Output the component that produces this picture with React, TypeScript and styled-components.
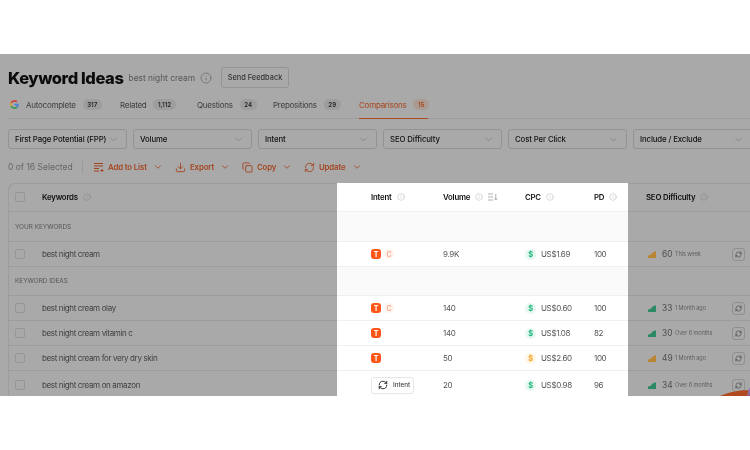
import styled, { createGlobalStyle } from "styled-components";
import { ChevronDown, Copy, Download, Info, RefreshCw } from "lucide-react";

const GlobalStyle = createGlobalStyle`
  html, body {
    margin: 0;
    background: #fff;
    font-family: Inter, "Liberation Sans", sans-serif;
  }
`;

const Page = styled.div`
  width: 750px;
  height: 450px;
  padding-top: 54px;
  box-sizing: border-box;
  overflow: hidden;
`;

const Shot = styled.div`
  position: relative;
  height: 342px;
  background: #a9a9a9;
  overflow: hidden;
  filter: blur(0.3px);
`;

const TitleRow = styled.div`
  display: flex;
  align-items: center;
  height: 21px;
  margin-top: 13px;
  padding-left: 8px;
`;

const Title = styled.h1`
  margin: 0;
  font-size: 16.5px;
  font-weight: 800;
  letter-spacing: -0.4px;
  color: #0c0c0c;
`;

const Subtitle = styled.span`
  margin-left: 5px;
  font-size: 8.4px;
  color: #575757;
`;

const TitleInfo = styled.span`
  display: inline-flex;
  margin-left: 5px;
  color: #5c5c5c;
`;

const FeedbackButton = styled.button`
  height: 21px;
  width: 68px;
  margin-left: 9px;
  padding: 0;
  border: 1px solid #949494;
  border-radius: 3px;
  background: transparent;
  font-family: inherit;
  font-size: 7.4px;
  font-weight: 500;
  color: #333;
`;

const TabBar = styled.div`
  display: flex;
  align-items: center;
  height: 28px;
  box-sizing: border-box;
  margin-top: 3px;
  margin-left: 8px;
  border-bottom: 1px solid #9c9c9c;
`;

const GoogleMark = styled.svg`
  width: 9px;
  height: 9px;
  margin: 0 7px 0 2px;
`;

const Tab = styled.div<{ $active?: boolean; $width: number }>`
  position: relative;
  display: flex;
  align-items: center;
  gap: 7px;
  width: ${(p) => p.$width}px;
  flex: none;
  height: 100%;
  font-size: 8px;
  letter-spacing: -0.25px;
  color: ${(p) => (p.$active ? "#a9441b" : "#3d3d3d")};

  &::after {
    content: "";
    display: ${(p) => (p.$active ? "block" : "none")};
    position: absolute;
    left: 0;
    bottom: -1px;
    width: 69px;
    height: 1px;
    background: #ab4a1f;
  }
`;

const Count = styled.span<{ $active?: boolean }>`
  padding: 2px 4.5px;
  border-radius: 8px;
  font-size: 6.2px;
  font-weight: 600;
  letter-spacing: 0;
  background: ${(p) => (p.$active ? "#a99a92" : "#9d9d9d")};
  color: ${(p) => (p.$active ? "#a9441b" : "#262626")};
`;

const Filters = styled.div`
  display: flex;
  gap: 6px;
  margin-top: 10px;
  padding-left: 8px;
`;

const Filter = styled.div`
  display: flex;
  align-items: center;
  flex: none;
  width: 119px;
  height: 20px;
  box-sizing: border-box;
  padding: 0 7px 0 6px;
  border: 1px solid #939393;
  border-radius: 3px;
  font-size: 7.8px;
  font-weight: 500;
  letter-spacing: -0.12px;
  color: #111;
  justify-content: space-between;
  white-space: nowrap;
`;

const FilterChevron = styled.span`
  display: inline-flex;
  color: #6f6f6f;
`;

const Actions = styled.div`
  display: flex;
  align-items: center;
  height: 18px;
  margin-top: 9px;
  padding-left: 8px;
`;

const Selected = styled.span`
  width: 74px;
  font-size: 8.5px;
  color: #666;
`;

const Divider = styled.span`
  width: 1px;
  height: 13px;
  margin-right: 10px;
  background: #9a9a9a;
`;

const Action = styled.div<{ $width: number }>`
  display: flex;
  align-items: center;
  flex: none;
  gap: 4px;
  width: ${(p) => p.$width}px;
  font-size: 7.8px;
  font-weight: 600;
  letter-spacing: -0.12px;
  color: #a3451f;

  svg:last-child {
    margin-left: 2px;
  }
`;

const Table = styled.div`
  display: flex;
  margin-top: 7px;
  margin-left: 8px;
`;

const Pane = styled.div<{ $spot?: boolean; $width: number }>`
  flex: none;
  width: ${(p) => p.$width}px;
  background: ${(p) => (p.$spot ? "#fff" : "transparent")};
`;

const LeftPane = styled(Pane)`
  box-shadow: inset 1px 1px 0 #9c9c9c;
  border-top-left-radius: 6px;
`;

const RightPane = styled(Pane)`
  box-shadow: inset 0 1px 0 #9c9c9c;
`;

const Row = styled.div<{ $h: number; $spot?: boolean; $band?: boolean }>`
  display: flex;
  align-items: center;
  height: ${(p) => p.$h}px;
  box-sizing: border-box;
  border-bottom: 1px solid ${(p) => (p.$spot ? "#f0f0f0" : "#9c9c9c")};
  background: ${(p) => (p.$spot && p.$band ? "#fafafa" : "transparent")};
`;

const Check = styled.span`
  flex: none;
  width: 8px;
  height: 8px;
  margin: 0 17px 0 7px;
  border: 1px solid #969696;
  border-radius: 2px;
`;

const HeadLabel = styled.span`
  display: inline-flex;
  align-items: center;
  gap: 5px;
  font-size: 7.8px;
  font-weight: 600;
  letter-spacing: -0.2px;
  color: #111;
  white-space: nowrap;

  svg {
    color: #7f7f7f;
  }
`;

const SpotHead = styled(HeadLabel)`
  svg {
    color: #a6a6a6;
  }
`;

const Keyword = styled.span`
  font-size: 8px;
  letter-spacing: -0.36px;
  color: #404040;
`;

const Band = styled.span`
  padding-left: 7px;
  font-size: 6.4px;
  color: #555;
`;

const Cell = styled.div<{ $width: number }>`
  display: flex;
  align-items: center;
  gap: 3px;
  flex: none;
  width: ${(p) => p.$width}px;
  font-size: 8px;
  letter-spacing: -0.35px;
  color: #555;
`;

const Spacer = styled.div<{ $width: number }>`
  flex: none;
  width: ${(p) => p.$width}px;
`;

const SortGlyph = styled.svg`
  width: 10px;
  height: 8px;
  fill: none;
  stroke: #a6a6a6;
  stroke-width: 0.9;
`;

const IntentT = styled.span`
  display: flex;
  align-items: center;
  justify-content: center;
  width: 10px;
  height: 10px;
  border-radius: 3px;
  background: #fd5618;
  color: #fff;
  font-size: 7px;
  font-weight: 700;
`;

const IntentC = styled.span`
  display: flex;
  align-items: center;
  justify-content: center;
  width: 10px;
  height: 10px;
  border-radius: 50%;
  background: #fff3ee;
  color: #ff9c7c;
  font-size: 7px;
  font-weight: 500;
`;

const IntentButton = styled.button`
  display: flex;
  align-items: center;
  gap: 5px;
  width: 43px;
  height: 17px;
  padding: 0 0 0 6px;
  border: 1px solid #e6e6e6;
  border-radius: 3px;
  background: #fff;
  font-family: inherit;
  font-size: 6.3px;
  font-weight: 500;
  color: #444;
`;

const Dollar = styled.span<{ $warn?: boolean }>`
  display: flex;
  align-items: center;
  justify-content: center;
  width: 11px;
  height: 11px;
  margin-right: 2px;
  border-radius: 50%;
  background: ${(p) => (p.$warn ? "#fff6e6" : "#e8f8f1")};
  color: ${(p) => (p.$warn ? "#f4a62a" : "#1fb57a")};
  font-size: 7.5px;
  font-weight: 700;
`;

const DiffIcon = styled.svg<{ $tone: string }>`
  flex: none;
  width: 8px;
  height: 7px;
  margin-left: 20px;
  fill: ${(p) => p.$tone};
`;

const DiffScore = styled.span`
  margin-left: 6px;
  width: 13px;
  font-size: 8.4px;
  color: #4f4f4f;
`;

const DiffAge = styled.span`
  width: 57px;
  font-size: 5.6px;
  letter-spacing: -0.12px;
  color: #606060;
  white-space: nowrap;
`;

const RefreshButton = styled.span`
  display: flex;
  align-items: center;
  justify-content: center;
  flex: none;
  width: 13px;
  height: 13px;
  box-sizing: border-box;
  border: 1px solid #8f8f8f;
  border-radius: 3px;
  color: #333;
`;

const Blob = styled.div`
  position: absolute;
  left: 700px;
  top: 336px;
  width: 100px;
  height: 60px;
  border-radius: 50%;
  background: #b04a1e;
`;

const Halo = styled.div`
  position: absolute;
  left: 747px;
  top: 316px;
  width: 60px;
  height: 60px;
  box-sizing: border-box;
  border: 2px solid #8a72b8;
  border-radius: 50%;
`;

const HEAD_H = 29;
const ROW_H = 25;

type Kw = {
  name: string;
  volume: string;
  cpc: string;
  warn?: boolean;
  pd: string;
  intent: "tc" | "t" | "button";
  tone: string;
  score: string;
  age: string;
  h?: number;
};

const GREEN = "#2b8a63";
const AMBER = "#b98534";

type RowData = { kind: "band"; label: string; h: number } | ({ kind: "row" } & Kw);

const ROWS: RowData[] = [
  { kind: "band", label: "YOUR KEYWORDS", h: 30 },
  { kind: "row", name: "best night cream", volume: "9.9K", cpc: "US$1.69", pd: "100", intent: "tc", tone: AMBER, score: "60", age: "This week" },
  { kind: "band", label: "KEYWORD IDEAS", h: 29 },
  { kind: "row", name: "best night cream olay", volume: "140", cpc: "US$0.60", pd: "100", intent: "tc", tone: GREEN, score: "33", age: "1 Month ago" },
  { kind: "row", name: "best night cream vitamin c", volume: "140", cpc: "US$1.08", pd: "82", intent: "t", tone: GREEN, score: "30", age: "Over 6 months" },
  { kind: "row", name: "best night cream for very dry skin", volume: "50", cpc: "US$2.60", warn: true, pd: "100", intent: "t", tone: AMBER, score: "49", age: "1 Month ago" },
  { kind: "row", name: "best night cream on amazon", volume: "20", cpc: "US$0.98", pd: "96", intent: "button", tone: GREEN, score: "34", age: "Over 6 months", h: 29 },
];

const TABS = [
  { label: "Autocomplete", count: "317", width: 94 },
  { label: "Related", count: "1,112", width: 77 },
  { label: "Questions", count: "24", width: 76 },
  { label: "Prepositions", count: "29", width: 86 },
];

const FILTERS = [
  "First Page Potential (FPP)",
  "Volume",
  "Intent",
  "SEO Difficulty",
  "Cost Per Click",
  "Include / Exclude",
];

function IntentCell({ intent }: { intent: Kw["intent"] }) {
  if (intent === "button") {
    return (
      <IntentButton type="button">
        <RefreshCw size={10} color="#111" />
        Intent
      </IntentButton>
    );
  }
  return (
    <>
      <IntentT>T</IntentT>
      {intent === "tc" && <IntentC>C</IntentC>}
    </>
  );
}

function AddListIcon() {
  return (
    <svg width="11" height="11" viewBox="0 0 11 11" fill="none" stroke="currentColor" strokeWidth="1.1">
      <path d="M1 1.5h9M1 4h9M1 6.5h5M1 9h5" />
      <path d="M7.5 8.5h3M9 7v3" />
    </svg>
  );
}

export default function App() {
  return (
    <Page>
      <GlobalStyle />
      <Shot>
        <TitleRow>
          <Title>Keyword Ideas</Title>
          <Subtitle>best night cream</Subtitle>
          <TitleInfo>
            <Info size={12} strokeWidth={1.2} />
          </TitleInfo>
          <FeedbackButton type="button">Send Feedback</FeedbackButton>
        </TitleRow>

        <TabBar>
          <GoogleMark viewBox="0 0 48 48">
            <path fill="#c9483a" d="M24 9.5c3.5 0 6.6 1.2 9.1 3.6l6.8-6.8C35.8 2.4 30.3 0 24 0 14.6 0 6.5 5.4 2.6 13.2l7.9 6.1C12.4 13.7 17.7 9.5 24 9.5z" />
            <path fill="#4a7fd6" d="M46.9 24.5c0-1.6-.1-3.1-.4-4.5H24v9h12.9c-.6 3-2.2 5.5-4.7 7.2l7.7 6c4.4-4.2 7-10.2 7-17.7z" />
            <path fill="#d6a32c" d="M10.5 28.7c-.5-1.4-.8-3-.8-4.7s.3-3.2.8-4.7l-7.9-6.1C.9 16.5 0 20.1 0 24s.9 7.5 2.6 10.8l7.9-6.1z" />
            <path fill="#3d9a53" d="M24 48c6.5 0 11.9-2.1 15.9-5.8l-7.7-6c-2.2 1.4-4.9 2.3-8.2 2.3-6.3 0-11.6-4.2-13.5-9.8l-7.9 6.1C6.5 42.6 14.6 48 24 48z" />
          </GoogleMark>
          {TABS.map((t) => (
            <Tab key={t.label} $width={t.width}>
              {t.label}
              <Count>{t.count}</Count>
            </Tab>
          ))}
          <Tab $active $width={80}>
            Comparisons
            <Count $active>15</Count>
          </Tab>
        </TabBar>

        <Filters>
          {FILTERS.map((f) => (
            <Filter key={f}>
              {f}
              <FilterChevron>
                <ChevronDown size={11} strokeWidth={1.2} />
              </FilterChevron>
            </Filter>
          ))}
        </Filters>

        <Actions>
          <Selected>0 of 16 Selected</Selected>
          <Divider />
          <Action $width={82}>
            <AddListIcon />
            Add to List
            <ChevronDown size={10} />
          </Action>
          <Action $width={67}>
            <Download size={11} />
            Export
            <ChevronDown size={10} />
          </Action>
          <Action $width={62}>
            <Copy size={11} />
            Copy
            <ChevronDown size={10} />
          </Action>
          <Action $width={70}>
            <RefreshCw size={11} />
            Update
            <ChevronDown size={10} />
          </Action>
        </Actions>

        <Table>
          <LeftPane $width={329}>
            <Row $h={HEAD_H}>
              <Check />
              <HeadLabel>
                Keywords <Info size={8} strokeWidth={1.2} />
              </HeadLabel>
            </Row>
            {ROWS.map((r, i) =>
              r.kind === "band" ? (
                <Row key={i} $h={r.h}>
                  <Band>{r.label}</Band>
                </Row>
              ) : (
                <Row key={i} $h={r.h ?? ROW_H}>
                  <Check />
                  <Keyword>{r.name}</Keyword>
                </Row>
              ),
            )}
          </LeftPane>

          <Pane $spot $width={291}>
            <Row $spot $h={HEAD_H}>
              <Spacer $width={34} />
              <Cell $width={72}>
                <SpotHead>
                  Intent <Info size={8} strokeWidth={1.2} />
                </SpotHead>
              </Cell>
              <Cell $width={82}>
                <SpotHead>
                  Volume <Info size={8} strokeWidth={1.2} />
                  <SortGlyph viewBox="0 0 10 8">
                    <path d="M0 1h5M0 4h5M0 7h5M7.8 1v6M6.3 5.5 7.8 7l1.5-1.5" />
                  </SortGlyph>
                </SpotHead>
              </Cell>
              <Cell $width={69}>
                <SpotHead>
                  CPC <Info size={8} strokeWidth={1.2} />
                </SpotHead>
              </Cell>
              <Cell $width={34}>
                <SpotHead>
                  PD <Info size={8} strokeWidth={1.2} />
                </SpotHead>
              </Cell>
            </Row>
            {ROWS.map((r, i) =>
              r.kind === "band" ? (
                <Row key={i} $spot $band $h={r.h} />
              ) : (
                <Row key={i} $spot $h={r.h ?? ROW_H}>
                  <Spacer $width={34} />
                  <Cell $width={72}>
                    <IntentCell intent={r.intent} />
                  </Cell>
                  <Cell $width={82}>{r.volume}</Cell>
                  <Cell $width={69}>
                    <Dollar $warn={r.warn}>$</Dollar>
                    {r.cpc}
                  </Cell>
                  <Cell $width={34}>{r.pd}</Cell>
                </Row>
              ),
            )}
          </Pane>

          <RightPane $width={122}>
            <Row $h={HEAD_H}>
              <Spacer $width={18} />
              <HeadLabel>
                SEO Difficulty <Info size={8} strokeWidth={1.2} />
              </HeadLabel>
            </Row>
            {ROWS.map((r, i) =>
              r.kind === "band" ? (
                <Row key={i} $h={r.h} />
              ) : (
                <Row key={i} $h={r.h ?? ROW_H}>
                  <DiffIcon $tone={r.tone} viewBox="0 0 8 7">
                    <path d="M0 7V4.6L2.4 4 4.6 1.6 7 .4a.7.7 0 0 1 1 .6v6z" />
                  </DiffIcon>
                  <DiffScore>{r.score}</DiffScore>
                  <DiffAge>{r.age}</DiffAge>
                  <RefreshButton>
                    <RefreshCw size={7} strokeWidth={1.8} />
                  </RefreshButton>
                </Row>
              ),
            )}
          </RightPane>
        </Table>
        <Blob />
        <Halo />
      </Shot>
    </Page>
  );
}
